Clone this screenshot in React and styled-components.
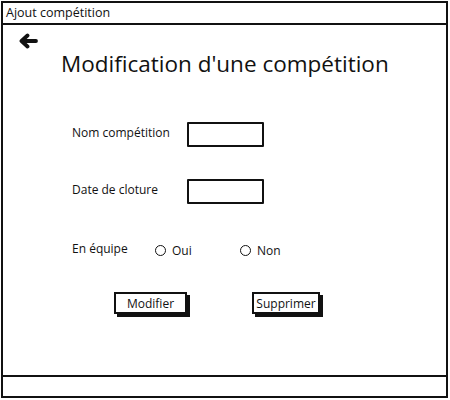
import React from 'react';
import styled, { createGlobalStyle } from 'styled-components';

const GlobalStyle = createGlobalStyle`
	html, body {
		margin: 0;
		padding: 0;
		background: #fff;
	}
	body {
		font-family: 'Open Sans', 'Liberation Sans', sans-serif;
		color: #111;
	}
`;

const Window = styled.div`
	box-sizing: border-box;
	margin: 1px 0 0 1px;
	width: 447px;
	height: 397px;
	border: 2px solid #111;
	display: flex;
	flex-direction: column;
`;

const TitleBar = styled.div`
	height: 20px;
	border-bottom: 2px solid #111;
	padding-left: 3px;
	font-size: 12.5px;
	line-height: 20px;
`;

const Content = styled.div`
	flex: 1;
	display: flex;
	flex-direction: column;
	padding: 8px 0 0 15px;
`;

const BackButton = styled.div`
	width: 20px;
	height: 16px;
	display: flex;
`;

const Heading = styled.h1`
	margin: 2px 0 0 43px;
	font-size: 22.5px;
	font-weight: 400;
	line-height: 26px;
`;

const Form = styled.div`
	margin: 45px 0 0 54px;
	display: flex;
	flex-direction: column;
`;

const Row = styled.div`
	display: flex;
	align-items: center;
	height: 25px;
	margin-top: ${(p) => p.offset || 0}px;
`;

const Label = styled.span`
	width: ${(p) => p.width}px;
	font-size: 12px;
	margin-top: -5px;
`;

const Input = styled.div`
	box-sizing: border-box;
	width: 77px;
	height: 25px;
	border: 2px solid #111;
	border-radius: 1px;
`;

const RadioOption = styled.label`
	width: ${(p) => p.width}px;
	display: flex;
	align-items: center;
	gap: 6px;
	font-size: 12px;
`;

const RadioDot = styled.span`
	box-sizing: border-box;
	width: 11px;
	height: 11px;
	border: 1.5px solid #111;
	border-radius: 50%;
`;

const Actions = styled.div`
	display: flex;
	gap: 65px;
	margin: 29px 0 0 96px;
`;

const Button = styled.div`
	box-sizing: border-box;
	width: ${(p) => p.width}px;
	height: 22px;
	border: 2px solid #111;
	box-shadow: 3px 3px 0 #111;
	display: flex;
	align-items: center;
	justify-content: center;
	font-size: 12px;
`;

const Footer = styled.div`
	height: 19px;
	border-top: 2px solid #111;
`;

const App = () => {
	return (
		<>
			<GlobalStyle />
			<Window>
				<TitleBar>Ajout compétition</TitleBar>
				<Content>
					<BackButton>
						<svg width="20" height="16" viewBox="0 0 20 16">
							<path
								d="M18 8H4M9.5 2.5L3.5 8l6 5.5"
								fill="none"
								stroke="#111"
								strokeWidth="3.8"
								strokeLinecap="round"
								strokeLinejoin="round"
							/>
						</svg>
					</BackButton>
					<Heading>Modification d'une compétition</Heading>
					<Form>
						<Row>
							<Label width={115}>Nom compétition</Label>
							<Input />
						</Row>
						<Row offset={32}>
							<Label width={115}>Date de cloture</Label>
							<Input />
						</Row>
						<Row offset={34}>
							<Label width={83}>En équipe</Label>
							<RadioOption width={85}>
								<RadioDot />
								Oui
							</RadioOption>
							<RadioOption width={60}>
								<RadioDot />
								Non
							</RadioOption>
						</Row>
					</Form>
					<Actions>
						<Button width={73}>Modifier</Button>
						<Button width={68}>Supprimer</Button>
					</Actions>
				</Content>
				<Footer />
			</Window>
		</>
	);
};

export default App;
